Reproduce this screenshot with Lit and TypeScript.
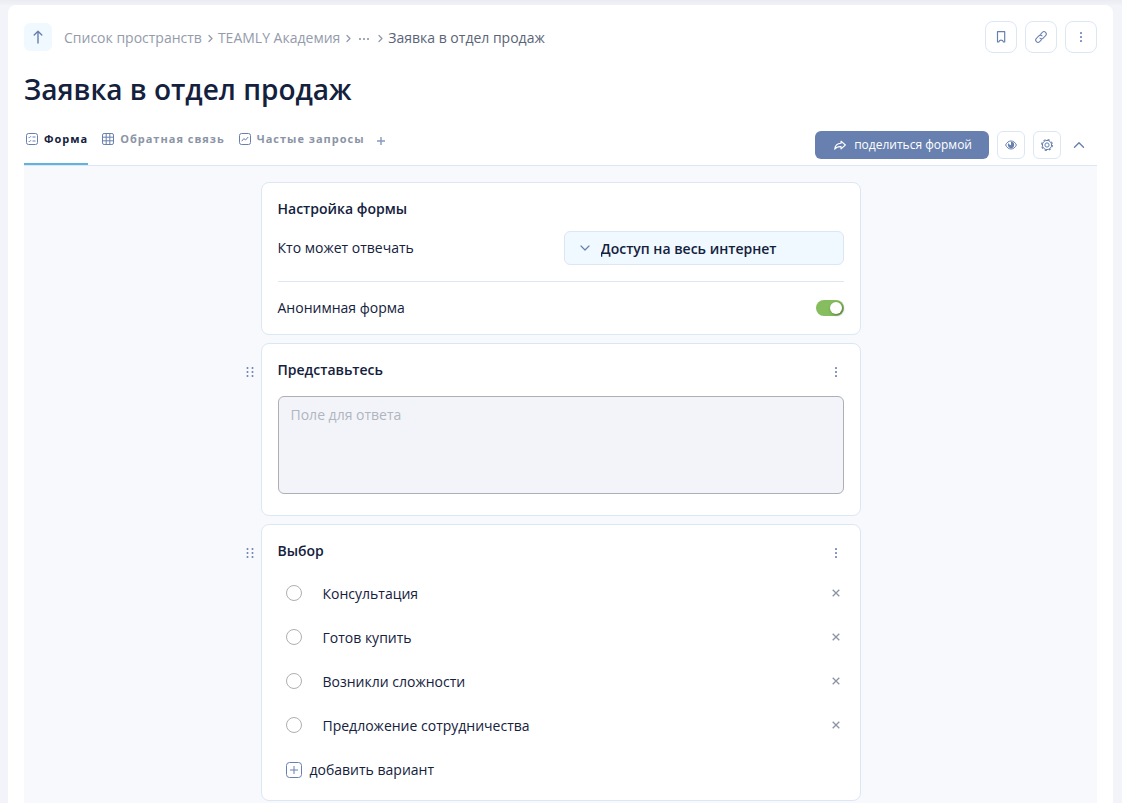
import { LitElement, html, css, svg } from "lit";
import { customElement, state } from "lit/decorators.js";

const arrowUp = html`<svg width="16" height="16" viewBox="0 0 16 16" fill="none" stroke="currentColor" stroke-width="1.4" stroke-linecap="round" stroke-linejoin="round" aria-hidden="true"><path d="M8 14V2.5M4.2 6L8 2.3 11.8 6" /></svg>`;
const crumbArrow = html`<svg class="sep" width="16" height="16" viewBox="0 0 16 16" fill="none" stroke="currentColor" stroke-width="1.3" stroke-linecap="round" stroke-linejoin="round" aria-hidden="true"><path d="M7 5.5L10 8.5 7 11.5" /></svg>`;
const dotsRow = html`<svg width="16" height="16" viewBox="0 0 16 16" fill="currentColor" opacity=".85" aria-hidden="true"><rect x="3" y="8" width="2" height="2" /><rect x="7" y="8" width="2" height="2" /><rect x="11" y="8" width="2" height="2" /></svg>`;
const bookmark = html`<svg width="16" height="16" viewBox="0 0 16 16" fill="none" stroke="currentColor" stroke-width="1.2" stroke-linejoin="round" aria-hidden="true"><path d="M4.5 2.7h7.2v10.3h-1.2C10 11.8 9.2 11.2 8.1 11.2S6.2 11.8 5.7 13H4.5z" /></svg>`;
const link = html`<svg width="16" height="16" viewBox="0 0 16 16" fill="none" stroke="currentColor" stroke-width="1" stroke-linecap="round" aria-hidden="true"><g transform="rotate(-45 8 8)"><path d="M6.5 10.3H3.8A2.3 2.3 0 0 1 3.8 5.7h3.4A2.3 2.3 0 0 1 9.5 8" /><path d="M9.5 5.7H12.2a2.3 2.3 0 0 1 0 4.6H8.8A2.3 2.3 0 0 1 6.5 8" /></g></svg>`;
const kebab = html`<svg width="16" height="16" viewBox="0 0 16 16" fill="currentColor" opacity=".85" aria-hidden="true"><rect x="7" y="3" width="2" height="2" rx="0.5" /><rect x="7" y="7" width="2" height="2" rx="0.5" /><rect x="7" y="11" width="2" height="2" rx="0.5" /></svg>`;
const iconForm = svg`<rect x="2.5" y="2.5" width="11" height="11" rx="2" /><path d="M4.6 6l.8.8L7 5.2M4.6 10l.8.8L7 9.2M8.5 6h3M8.5 10h3" />`;
const iconTable = svg`<rect x="2.5" y="2.5" width="11" height="11" rx="1.6" /><path d="M2.5 6.2h11M2.5 9.8h11M6.2 2.5v11M9.8 2.5v11" />`;
const iconChart = svg`<rect x="2.5" y="2.5" width="11" height="11" rx="2" /><path d="M4.8 10.2l2-2.6 1.8 1.4 2.6-3" />`;
const plus = html`<svg width="16" height="16" viewBox="0 0 16 16" fill="none" stroke="currentColor" stroke-width="1.4" opacity=".8" aria-hidden="true"><path d="M8 4v8M4 8h8" /></svg>`;
const share = html`<svg width="16" height="16" viewBox="0 0 16 16" fill="none" stroke="currentColor" stroke-width="1.1" stroke-linejoin="round" aria-hidden="true"><path d="M9 4.2L13.4 8 9 11.8V9.6C6 9.4 4 10.4 2.7 12.2 3 8.9 5 6.6 9 6.3z" /></svg>`;
const eye = html`<svg width="16" height="16" viewBox="0 0 16 16" fill="none" stroke="currentColor" stroke-width="1" aria-hidden="true"><path d="M2.6 8C3.8 5.4 5.7 4 8 4s4.2 1.4 5.4 4C12.2 10.6 10.3 12 8 12S3.8 10.6 2.6 8z" /><path fill="currentColor" stroke="none" d="M8 8V4.8A3.3 3.3 0 0 1 11.2 8 3.2 3.2 0 1 1 5.6 5.9C6 7.3 6.8 8 8 8z" /></svg>`;
const gear = html`<svg width="16" height="16" viewBox="0 0 16 16" fill="none" stroke="currentColor" stroke-linejoin="round" aria-hidden="true"><circle cx="8" cy="8" r="4.6" stroke-width="1" /><circle cx="8" cy="8" r="5.4" stroke-width="1.1" stroke-dasharray="2.12 2.12" /><circle cx="8" cy="8" r="2.1" stroke-width="1" /></svg>`;
const chevronUp = html`<svg width="16" height="16" viewBox="0 0 16 16" fill="none" stroke="currentColor" stroke-width="1.4" stroke-linecap="round" stroke-linejoin="round" aria-hidden="true"><path d="M3.5 10.2L8 5.8l4.5 4.4" /></svg>`;
const chevronDown = html`<svg class="select-arrow" width="16" height="16" viewBox="0 0 16 16" fill="none" stroke="currentColor" stroke-width="1.2" stroke-linecap="round" stroke-linejoin="round" aria-hidden="true"><path d="M4 6L8 10l4-4" /></svg>`;
const cross = html`<svg width="16" height="16" viewBox="0 0 16 16" fill="none" stroke="currentColor" stroke-width="1.3" aria-hidden="true"><path d="M4.7 4.7l6.6 6.6M11.3 4.7l-6.6 6.6" /></svg>`;
const plusBox = html`<svg width="16" height="16" viewBox="0 0 16 16" fill="none" stroke="currentColor" aria-hidden="true"><rect x=".5" y=".5" width="15" height="15" rx="3" /><path d="M8 4v8M4 8h8" /></svg>`;
const grip = html`<svg width="8" height="12" viewBox="0 0 8 12" fill="currentColor" aria-hidden="true"><circle cx="1.5" cy="2" r="1" /><circle cx="6.5" cy="2" r="1" /><circle cx="1.5" cy="6" r="1" /><circle cx="6.5" cy="6" r="1" /><circle cx="1.5" cy="10" r="1" /><circle cx="6.5" cy="10" r="1" /></svg>`;

@customElement("app-root")
export class AppRoot extends LitElement {
  @state() private activeTab = 0;

  private tabs = [
    { label: "Форма", icon: iconForm },
    { label: "Обратная связь", icon: iconTable },
    { label: "Частые запросы", icon: iconChart },
  ];

  private options = ["Консультация", "Готов купить", "Возникли сложности", "Предложение сотрудничества"];

  static styles = css`
    :host {
      --ink: #14213d;
      --blue: #6880b0;
      --line: #dce7f5;
      display: flex;
      flex-direction: column;
      box-sizing: border-box;
      min-height: 100vh;
      padding: 5px 9px 0 8px;
      background: #f3f4f9 linear-gradient(#ebecf1, #f1f2f7) top / 100% 5px no-repeat;
      color: var(--ink);
      font: 14px/20px "Open Sans", "Noto Sans", sans-serif;
    }
    *, *::before { box-sizing: border-box; }
    svg { display: block; flex: none; }
    button, input, select, textarea { font: inherit; color: inherit; margin: 0; }
    button { display: flex; align-items: center; justify-content: center; padding: 0; border: 0; background: none; color: var(--blue); cursor: pointer; }
    h1, h2, ol { margin: 0; padding: 0; }
    .panel {
      display: flex;
      flex-direction: column;
      flex: 1;
      padding: 16px 16px 0;
      background: #fff;
      border-radius: 8px 8px 0 0;
    }
    .top, .crumbs, .crumb, .actions, .tabs, .tools, .row, .head, .option { display: flex; align-items: center; }
    .top { justify-content: space-between; }
    .crumb-nav { display: flex; align-items: center; gap: 12px; }
    .up { width: 28px; height: 28px; border-radius: 6px; background: #f0f9ff; }
    .crumbs { padding-top: 2px; list-style: none; color: #949bab; }
    .crumbs a { color: inherit; text-decoration: none; }
    .crumbs .more { color: inherit; }
    .crumbs .current { color: #5a6478; }
    .actions { gap: 8px; }
    .square { width: 32px; height: 32px; border: 1px solid var(--line); border-radius: 8px; }
    .square.small { width: 28px; height: 28px; border-radius: 6px; }
    h1 { margin-top: 16px; font-size: 28px; line-height: 40px; font-weight: 600; }
    .bar { display: flex; align-items: flex-end; justify-content: space-between; margin-top: 21px; border-bottom: 1px solid var(--line); }
    .tabs { gap: 12px; align-items: flex-start; }
    .tab {
      gap: 4px;
      padding-bottom: 15px;
      border-bottom: 2px solid transparent;
      font-size: 11px;
      line-height: 18px;
      font-weight: 700;
      letter-spacing: 1px;
    }
    .tab span { color: #8b94a6; }
    .tab.active { border-color: #62b2dc; }
    .tab.active span { color: var(--ink); }
    .add-tab { margin: 3px 0 0 -4px; }
    .tools { gap: 8px; padding-bottom: 6px; }
    .share { gap: 6px; height: 28px; padding: 0 17px; border-radius: 6px; background: var(--blue); color: #fff; font-size: 12px; font-weight: 500; }
    .fold { width: 36px; height: 28px; margin-left: -8px; }
    .canvas { display: flex; flex-direction: column; flex: 1; gap: 8px; padding-top: 16px; background: #f8f9fd; }
    .block { display: grid; grid-template-columns: 24px minmax(0, 600px) 24px; justify-content: center; align-items: start; }
    .grip { width: 24px; height: 16px; margin-top: 21px; padding-left: 2px; cursor: grab; }
    .card { grid-column: 2; padding: 16px; background: #fff; border: 1px solid var(--line); border-radius: 8px; }
    h2 { font-size: 14px; line-height: 20px; font-weight: 600; }
    .row, .head { justify-content: space-between; }
    .access { margin-top: 12px; padding-bottom: 16px; border-bottom: 1px solid var(--line); }
    .anonymous { padding-top: 16px; }
    .select { display: grid; align-items: center; width: 280px; }
    .select select {
      grid-area: 1 / 1;
      width: 100%;
      height: 34px;
      padding: 2px 12px 0 36px;
      appearance: none;
      border: 1px solid var(--line);
      border-radius: 6px;
      background: #f0f9ff;
      font-weight: 600;
    }
    .select-arrow { grid-area: 1 / 1; z-index: 1; margin-left: 13px; color: var(--blue); pointer-events: none; }
    .switch { appearance: none; display: flex; justify-content: flex-end; width: 28px; height: 16px; padding: 2px; border-radius: 8px; background: #85bd5f; }
    .switch::before { content: ""; width: 12px; height: 12px; border-radius: 50%; background: #fff; box-shadow: 1px 1px 3px rgba(0, 0, 0, 0.4); }
    .switch:not(:checked) { justify-content: flex-start; background: #b9bfcb; }
    .menu { width: 16px; height: 20px; padding-top: 3px; }
    textarea { display: block; width: 100%; height: 98px; margin: 16px 0 5px; padding: 8px 12px; resize: none; border: 1px solid #adafb5; border-radius: 6px; background: #f3f4f9; }
    textarea::placeholder { color: #b0b5c0; opacity: 1; }
    .choice { padding-bottom: 8px; }
    .options { display: flex; flex-direction: column; margin-top: 11px; }
    .option { justify-content: space-between; height: 44px; padding-left: 8px; }
    .option label { display: flex; align-items: center; gap: 21px; }
    .radio { appearance: none; width: 16px; height: 16px; border: 1px solid #adafb5; border-radius: 50%; background: #fff; }
    .radio:checked { border: 5px solid var(--blue); }
    .radio, .remove { margin-bottom: 2px; }
    .remove { color: #8b94a6; }
    .add { gap: 8px; }
    .add span { color: var(--ink); }
  `;

  private renderHead(title: string) {
    return html`<div class="head"><h2>${title}</h2><button class="menu" aria-label="Меню вопроса">${kebab}</button></div>`;
  }

  render() {
    return html`
      <main class="panel">
        <header class="top">
          <nav class="crumb-nav" aria-label="Путь">
            <button class="up" aria-label="Наверх">${arrowUp}</button>
            <ol class="crumbs">
              <li class="crumb"><a href="#">Список пространств</a>${crumbArrow}</li>
              <li class="crumb"><a href="#">TEAMLY Академия</a>${crumbArrow}</li>
              <li class="crumb"><button class="more" aria-label="Ещё">${dotsRow}</button>${crumbArrow}</li>
              <li class="crumb current" aria-current="page">Заявка в отдел продаж</li>
            </ol>
          </nav>
          <div class="actions">
            <button class="square" aria-label="В закладки">${bookmark}</button>
            <button class="square" aria-label="Копировать ссылку">${link}</button>
            <button class="square" aria-label="Меню">${kebab}</button>
          </div>
        </header>

        <h1>Заявка в отдел продаж</h1>

        <div class="bar">
          <div class="tabs">
            ${this.tabs.map(
              (tab, i) => html`<button class="tab ${i === this.activeTab ? "active" : ""}" @click=${() => (this.activeTab = i)}>
                <svg width="16" height="16" viewBox="0 0 16 16" fill="none" stroke="currentColor" aria-hidden="true">${tab.icon}</svg>
                <span>${tab.label}</span>
              </button>`
            )}
            <button class="add-tab" aria-label="Добавить вкладку">${plus}</button>
          </div>
          <div class="tools">
            <button class="share">${share}<span>поделиться формой</span></button>
            <button class="square small" aria-label="Просмотр">${eye}</button>
            <button class="square small" aria-label="Настройки">${gear}</button>
            <button class="fold" aria-label="Свернуть">${chevronUp}</button>
          </div>
        </div>

        <div class="canvas">
          <div class="block">
            <section class="card">
              <h2>Настройка формы</h2>
              <div class="row access">
                <label for="access">Кто может отвечать</label>
                <div class="select">
                  ${chevronDown}
                  <select id="access"><option>Доступ на весь интернет</option></select>
                </div>
              </div>
              <div class="row anonymous">
                <label for="anonymous">Анонимная форма</label>
                <input class="switch" id="anonymous" type="checkbox" role="switch" checked />
              </div>
            </section>
          </div>

          <div class="block">
            <button class="grip" aria-label="Переместить">${grip}</button>
            <section class="card">
              ${this.renderHead("Представьтесь")}
              <textarea aria-label="Представьтесь" placeholder="Поле для ответа"></textarea>
            </section>
          </div>

          <div class="block">
            <button class="grip" aria-label="Переместить">${grip}</button>
            <section class="card choice">
              ${this.renderHead("Выбор")}
              <div class="options">
                ${this.options.map(
                  (text, i) => html`<div class="option">
                    <label for="option-${i}"><input class="radio" id="option-${i}" type="radio" name="choice" />${text}</label>
                    <button class="remove" aria-label="Удалить вариант">${cross}</button>
                  </div>`
                )}
                <div class="option"><button class="add">${plusBox}<span>добавить вариант</span></button></div>
              </div>
            </section>
          </div>
        </div>
      </main>
    `;
  }
}
